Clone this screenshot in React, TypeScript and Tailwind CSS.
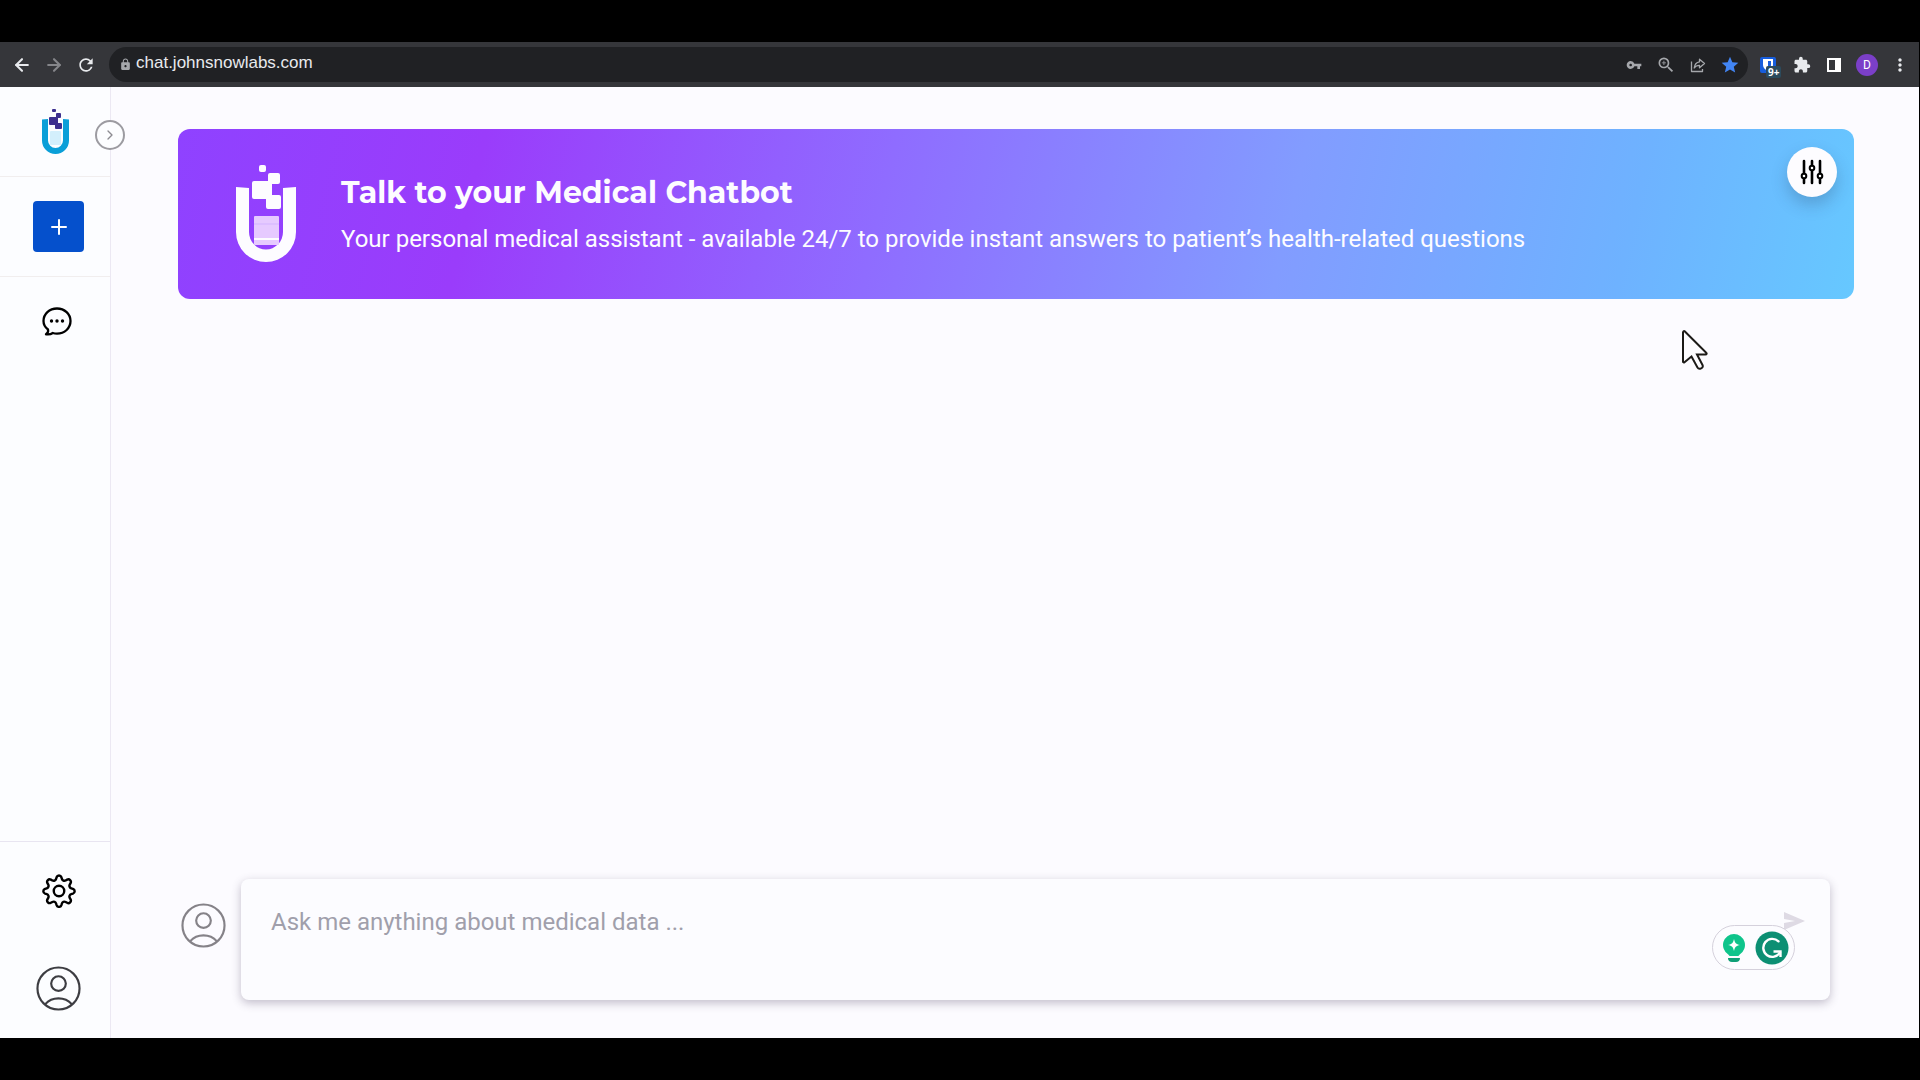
import React from "react";
import { ArrowLeft, ArrowRight, Plus, ChevronRight } from "lucide-react";
import {
  MdRefresh,
  MdLock,
  MdVpnKey,
  MdStar,
  MdExtension,
  MdMoreVert,
  MdOutlineZoomIn,
} from "react-icons/md";

type IconProps = { className?: string };

function BrandMark({ className }: IconProps) {
  return (
    <svg viewBox="0 0 27 46" className={className} aria-hidden="true">
      <path d="M0 10.500l6-.5v21.500a7.500 7.500 0 0 0 15 0V10l6 .5v21a13.500 13.500 0 0 1-27 0z" fill="#0a9fd8" />
      <rect x="8" y="22" width="11" height="14" rx="1" fill="#d3effc" />
      <g fill="#3d2f8f">
        <rect x="10" y="0" width="4" height="3" rx="1" />
        <rect x="14" y="4" width="5" height="5" rx="1" />
        <rect x="7" y="8" width="9" height="8" rx="1" />
        <rect x="13" y="14" width="7" height="6" rx="1" />
      </g>
    </svg>
  );
}

function BannerMark({ className }: IconProps) {
  return (
    <svg viewBox="0 0 62 98" className={className} fill="#fdfcff" aria-hidden="true">
      <path d="M1 22l13 1v44a17 17.500 0 0 0 34 0V23l13-1v45a30 30 0 0 1-60 0z" />
      <rect x="24" y="0" width="7" height="7" rx="2" />
      <rect x="33" y="8" width="12" height="11" rx="2" />
      <rect x="17" y="16" width="20" height="18" rx="2" />
      <rect x="31" y="30" width="15" height="14" rx="2" />
      <rect x="19" y="51" width="25" height="29" rx="1" fill="#e6caff" />
      <path d="M19 59h25" stroke="#d3b4ff" strokeWidth="1" />
      <path d="M19 74h25" stroke="#fdfcff" strokeWidth="2" />
    </svg>
  );
}

function PersonIcon({ className }: IconProps) {
  return (
    <svg viewBox="0 0 46 46" className={className} fill="none" stroke="currentColor" strokeWidth="2.200" aria-hidden="true">
      <circle cx="23" cy="23" r="21.500" />
      <circle cx="23" cy="18" r="7.500" />
      <path d="M9.500 39a17 15 0 0 1 27 0" />
    </svg>
  );
}

function GearIcon({ className }: IconProps) {
  return (
    <svg viewBox="0 0 24 24" className={className} fill="none" stroke="currentColor" strokeWidth="1.700" strokeLinejoin="round" aria-hidden="true">
      <circle cx="12" cy="12" r="3.700" />
      <path d="M10.300 2.300a1.800 1.800 0 0 1 3.400 0l.35 1.200a1.800 1.800 0 0 0 2.600 1.070l1.100-.6a1.800 1.800 0 0 1 2.430 2.430l-.6 1.100a1.800 1.800 0 0 0 1.070 2.600l1.200.35a1.800 1.800 0 0 1 0 3.400l-1.200.35a1.800 1.800 0 0 0-1.070 2.600l.6 1.100a1.800 1.800 0 0 1-2.430 2.430l-1.100-.6a1.800 1.800 0 0 0-2.600 1.070l-.35 1.200a1.800 1.800 0 0 1-3.400 0l-.35-1.200a1.800 1.800 0 0 0-2.600-1.070l-1.100.6a1.800 1.800 0 0 1-2.430-2.430l.6-1.100a1.800 1.800 0 0 0-1.070-2.600l-1.200-.35a1.800 1.800 0 0 1 0-3.400l1.200-.35a1.800 1.800 0 0 0 1.070-2.600l-.6-1.100a1.800 1.800 0 0 1 2.430-2.430l1.100.6a1.800 1.800 0 0 0 2.600-1.070z" />
    </svg>
  );
}

function ChatIcon({ className }: IconProps) {
  return (
    <svg viewBox="0 0 30 30" className={className} aria-hidden="true">
      <path d="M6 22.500c.6 2.200-.4 3.700-2 4.800 2.600.4 5 0 6.800-1.300 1.300.4 2.700.6 4.200.6 7.700 0 13.500-5.500 13.500-12.500S22.700 1.500 15 1.500 1.500 7 1.500 14.100c0 3.300 1.500 6.200 4.500 8.400z" fill="none" stroke="currentColor" strokeWidth="2.300" strokeLinejoin="round" />
      <circle cx="9.500" cy="14" r="1.700" />
      <circle cx="15" cy="14" r="1.700" />
      <circle cx="20.500" cy="14" r="1.700" />
    </svg>
  );
}

function SlidersIcon({ className }: IconProps) {
  return (
    <svg viewBox="0 0 26 26" className={className} fill="#fff" stroke="currentColor" strokeLinecap="round" aria-hidden="true">
      <path d="M5 2v22M13 2v22M21 2v22" strokeWidth="2.600" />
      <g strokeWidth="2">
        <circle cx="5" cy="17" r="2.300" />
        <circle cx="13" cy="9" r="2.300" />
        <circle cx="21" cy="17" r="2.300" />
      </g>
    </svg>
  );
}

function ShareIcon({ className }: IconProps) {
  return (
    <svg viewBox="0 0 16 16" className={className} fill="none" stroke="currentColor" strokeWidth="1.300" strokeLinejoin="round" aria-hidden="true">
      <path d="M1.500 4.500v10h11v-2.500" />
      <path d="M9.500 2.200l5 4.300-5 4.300V8.300c-2.500 0-4 .8-5.300 2.700.4-3.400 2-5.700 5.300-6.200z" />
    </svg>
  );
}

function PasswordExtension() {
  return (
    <button type="button" aria-label="Password manager, 9+ items" className="relative size-5 cursor-pointer">
      <svg viewBox="0 0 16 16" className="size-4" aria-hidden="true">
        <rect width="16" height="16" rx="2" fill="#175ddc" />
        <path d="M3 2h10v6c0 3-2.500 5-5 6-2.500-1-5-3-5-6z" fill="#fff" />
        <path d="M8 4h3v4c0 2-1.500 3.200-3 4z" fill="#175ddc" />
      </svg>
      <span className="absolute top-[11px] left-[6px] rounded-xs bg-[#2b4a5c] px-0.5 font-['Open_Sans',sans-serif] text-[10px] leading-3 font-bold text-white">
        9+
      </span>
    </button>
  );
}

function BrowserBar() {
  return (
    <header className="flex h-[45px] shrink-0 items-center bg-[#35363a] text-[#e8eaed]">
      <nav aria-label="Browser" className="flex w-[109px] shrink-0 items-center gap-3 pl-3">
        <button type="button" aria-label="Back"><ArrowLeft className="size-5" strokeWidth={2.5} /></button>
        <button type="button" aria-label="Forward" className="text-[#85868a]"><ArrowRight className="size-5" strokeWidth={2.5} /></button>
        <button type="button" aria-label="Reload"><MdRefresh className="size-5" /></button>
      </nav>
      <div className="flex h-[35px] min-w-0 flex-1 items-center rounded-full bg-[#202124] pr-2 pl-[10px] text-[#a5a7ab]">
        <MdLock className="size-[13px] shrink-0" />
        <input
          aria-label="Address"
          defaultValue="chat.johnsnowlabs.com"
          className="mb-1 ml-1 min-w-0 flex-1 bg-transparent font-['Liberation_Sans',sans-serif] text-[17px] leading-6 text-[#e8eaed] outline-none"
        />
        <div className="flex items-center gap-3">
          <button type="button" aria-label="Passwords"><MdVpnKey className="size-5 p-0.5" /></button>
          <button type="button" aria-label="Zoom"><MdOutlineZoomIn className="size-5" /></button>
          <button type="button" aria-label="Share"><ShareIcon className="size-5 p-0.5" /></button>
          <button type="button" aria-label="Bookmark" className="text-[#4285f4]"><MdStar className="size-5" /></button>
        </div>
      </div>
      <div className="ml-3 flex shrink-0 items-center gap-3 pr-[9px]">
        <PasswordExtension />
        <button type="button" aria-label="Extensions"><MdExtension className="size-5 p-px" /></button>
        <button type="button" aria-label="Side panel">
          <svg viewBox="0 0 20 20" className="size-5" aria-hidden="true">
            <path fill="#fff" fillRule="evenodd" d="M3 3h14v14H3zM5 5v10h6V5z" />
          </svg>
        </button>
        <button type="button" aria-label="Profile" className="flex size-[22px] items-center justify-center rounded-full bg-[#7b3fc8] font-['Roboto',sans-serif] text-xs text-white">D</button>
        <button type="button" aria-label="Menu"><MdMoreVert className="size-5" /></button>
      </div>
    </header>
  );
}

function Sidebar() {
  return (
    <aside className="relative flex w-[111px] shrink-0 flex-col border-r border-[#ece8f3] bg-[#fcfdff] text-black">
      <div className="flex h-[90px] items-start border-b border-[#f1eeee] pt-[22px] pl-[42px]">
        <a href="#home" aria-label="Home"><BrandMark className="h-[46px] w-[27px]" /></a>
      </div>
      <button
        type="button"
        aria-label="Expand sidebar"
        className="absolute top-[33px] -right-[15px] flex size-[30px] items-center justify-center rounded-full border-2 border-[#9c9ba1] bg-[#fcfdff] text-[#8c8b91]"
      >
        <ChevronRight className="size-4" strokeWidth={2} />
      </button>
      <div className="flex h-[100px] items-center justify-center border-b border-[#f1eeee] pl-[7px]">
        <button type="button" aria-label="New chat" className="flex size-[51px] items-center justify-center rounded bg-[#0550cc] text-white">
          <Plus className="size-6" strokeWidth={2} />
        </button>
      </div>
      <button type="button" aria-label="Conversations" className="mt-[30px] ml-[42px] self-start"><ChatIcon className="size-[30px]" /></button>
      <div className="mt-auto flex h-[197px] flex-col items-center border-t border-[#e8e5f1] pt-8 pl-[7px]">
        <button type="button" aria-label="Settings"><GearIcon className="size-[34px]" /></button>
        <button type="button" aria-label="Account" className="mt-[58px] text-[#3d3d42]"><PersonIcon className="size-[45px]" /></button>
      </div>
    </aside>
  );
}

function Banner() {
  return (
    <section className="relative flex h-[170px] items-start rounded-xl bg-linear-[103deg,#8f42ff_0%,#9a3cfb_18%,#8f6cff_42%,#829cff_66%,#6eb2ff_86%,#66c8ff_100%] pt-9 pr-24 pl-[57px] text-[#fdfcff]">
      <BannerMark className="h-[98px] w-[62px] shrink-0" />
      <div className="ml-11">
        <h1 className="font-['Montserrat','Inter',sans-serif] text-3xl leading-[56px] font-bold">Talk to your Medical Chatbot</h1>
        <p className="font-['Roboto',sans-serif] text-2xl leading-9">
          Your personal medical assistant - available 24/7 to provide instant answers to patient’s health-related questions
        </p>
      </div>
      <button
        type="button"
        aria-label="Chat settings"
        className="absolute top-[18px] right-[17px] flex size-[50px] items-center justify-center rounded-full bg-[#fdfcff] text-black shadow-[0_8px_16px_rgba(40,60,90,0.25)]"
      >
        <SlidersIcon className="size-[26px]" />
      </button>
    </section>
  );
}

function WritingAssistant() {
  return (
    <div className="flex h-[45px] w-[83px] items-center justify-between rounded-full border border-[#d5d1dc] bg-[#fcfcff] pr-[5px] pl-[9px]">
      <button type="button" aria-label="Suggestions">
        <svg viewBox="0 0 24 30" className="h-[30px] w-6" aria-hidden="true">
          <path d="M12 1a11 11 0 0 1 6 20.200c-.8.500-1 1.800-1.800 1.800H7.800C7 23 6.800 21.700 6 21.200A11 11 0 0 1 12 1z" fill="#0ec48b" />
          <path d="M12 6c.9 4 2 5.100 6 6-4 .9-5.100 2-6 6-.9-4-2-5.100-6-6 4-.9 5.100-2 6-6z" fill="#fff" />
          <path d="M6 25h12c0 2.500-1.500 4-4 4h-4c-2.500 0-4-1.500-4-4z" fill="#0e9f76" />
        </svg>
      </button>
      <button type="button" aria-label="Open writing assistant">
        <svg viewBox="0 0 34 34" className="size-[34px]" fill="none" stroke="#fff" strokeWidth="2.400" aria-hidden="true">
          <circle cx="17" cy="17" r="16.500" fill="#0c8f73" stroke="none" />
          <path d="M23.500 10.300A9 9 0 1 0 25 21.500" strokeLinecap="round" />
          <path d="M18.500 20.500h7v5.500" />
        </svg>
      </button>
    </div>
  );
}

function Composer() {
  return (
    <form className="mt-auto mr-[24px] flex items-center gap-[15px]" onSubmit={(e) => e.preventDefault()}>
      <PersonIcon className="ml-[3px] mb-7 size-[45px] shrink-0 text-[#858288]" />
      <div className="relative flex min-w-0 flex-1 rounded-lg bg-[#fcfcff] shadow-[0_3px_10px_rgba(70,60,90,0.32)]">
        <textarea
          aria-label="Message"
          placeholder="Ask me anything about medical data ..."
          className="block h-[121px] w-full resize-none rounded-lg bg-transparent pt-[25px] pr-32 pl-[30px] font-['Roboto',sans-serif] text-2xl leading-9 placeholder:text-[#a09fab] outline-none"
        />
        <button type="submit" aria-label="Send" className="absolute top-8 right-[25px] text-[#dedae4]">
          <svg viewBox="0 0 21 20" className="h-5 w-[21px]" fill="currentColor" aria-hidden="true">
            <path d="M0 1l21 9-21 9v-7l11-2L0 8z" />
          </svg>
        </button>
        <div className="absolute right-[35px] bottom-[30px]"><WritingAssistant /></div>
      </div>
    </form>
  );
}

function Pointer() {
  return (
    <svg viewBox="0 0 27 41" className="pointer-events-none absolute top-[242px] right-[211px] h-[41px] w-[27px]" aria-hidden="true">
      <path d="M2 3.500v29c0 1 .8 1.300 1.500.7l7-5.700 6 11c1.500 2.600 6.500.6 5-2.500l-5.500-10.500h8.500c1.200 0 1.500-1 .7-1.700L3.700 2.200C2.900 1.600 2 2.300 2 3.500z" fill="#fdfcff" stroke="#1c1a17" strokeWidth="2" />
    </svg>
  );
}

export default function App() {
  return (
    <div className="flex h-screen flex-col bg-black py-[42px] pr-px">
      <BrowserBar />
      <div className="flex min-h-0 flex-1 bg-[#fcfbff]">
        <Sidebar />
        <main className="relative flex min-w-0 flex-1 flex-col pt-[42px] pr-[65px] pb-[38px] pl-[67px]">
          <Banner />
          <Composer />
          <Pointer />
        </main>
      </div>
    </div>
  );
}
